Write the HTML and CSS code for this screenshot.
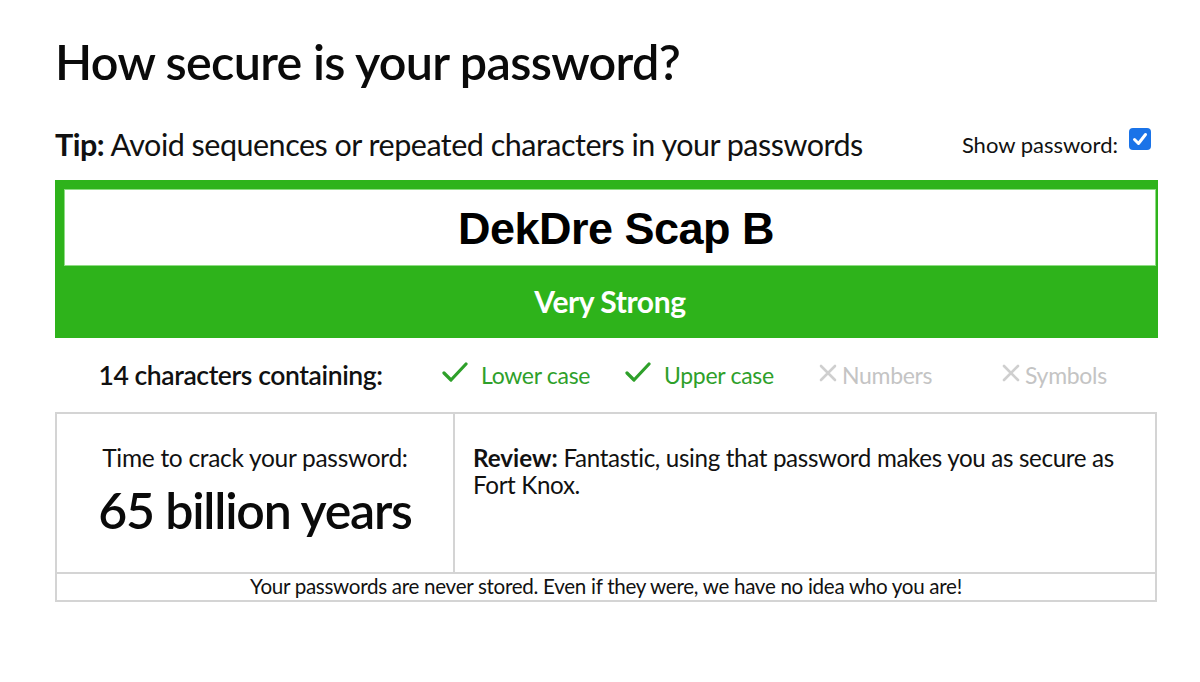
FILE: index.html
```html
<!DOCTYPE html>
<html>
<head>
<meta charset="utf-8">
<link rel="stylesheet" href="styles.css">
</head>
<body>
<div class="page">
  <h1 class="title">How secure is your password?</h1>
  <div class="tip-row">
    <p class="tip"><strong>Tip:</strong> Avoid sequences or repeated characters in your passwords</p>
    <label class="show">Show password:<span class="checkbox"><svg viewBox="0 0 22 22" width="22" height="22"><rect x="0" y="0" width="22" height="22" rx="4" fill="#1a73e8"/><path d="M5.5 11.5 L9.5 15.5 L16.5 6.5" fill="none" stroke="#fff" stroke-width="3" stroke-linecap="round" stroke-linejoin="round"/></svg></span></label>
  </div>
  <div class="meter">
    <div class="pw">DekDre Scap B</div>
    <div class="strength">Very Strong</div>
  </div>
  <div class="chars">
    <div class="count">14 characters containing:</div>
    <div class="crit ok"><svg class="ic" viewBox="0 0 26 22" width="26" height="22"><path d="M2 12 L9 19 L24 3" fill="none" stroke="#2ea02a" stroke-width="3.2" stroke-linecap="round" stroke-linejoin="round"/></svg><span>Lower case</span></div>
    <div class="crit ok"><svg class="ic" viewBox="0 0 26 22" width="26" height="22"><path d="M2 12 L9 19 L24 3" fill="none" stroke="#2ea02a" stroke-width="3.2" stroke-linecap="round" stroke-linejoin="round"/></svg><span>Upper case</span></div>
    <div class="crit no"><svg class="ix" viewBox="0 0 20 20" width="20" height="20"><path d="M3 3 L17 17 M17 3 L3 17" fill="none" stroke="#cfcfcf" stroke-width="2.6" stroke-linecap="round"/></svg><span>Numbers</span></div>
    <div class="crit no"><svg class="ix" viewBox="0 0 20 20" width="20" height="20"><path d="M3 3 L17 17 M17 3 L3 17" fill="none" stroke="#cfcfcf" stroke-width="2.6" stroke-linecap="round"/></svg><span>Symbols</span></div>
  </div>
  <div class="results">
    <div class="crack">
      <div class="crack-label">Time to crack your password:</div>
      <div class="crack-time">65 billion years</div>
    </div>
    <div class="review"><strong>Review:</strong> Fantastic, using that password makes you as secure as Fort Knox.</div>
    <div class="note">Your passwords are never stored. Even if they were, we have no idea who you are!</div>
  </div>
</div>
</body>
</html>
```

FILE: styles.css
```css
* { box-sizing: border-box; }
html, body { margin: 0; padding: 0; background: #fff; }
body { font-family: Lato, "Noto Sans", sans-serif; color: #111; }
.page { padding: 0 42px 0 55px; }
.title {
  margin: 0;
  padding-top: 33px;
  font-size: 48.5px;
  font-weight: 600;
  letter-spacing: -0.7px;
  line-height: 56px;
  color: #0a0a0a;
}
.tip-row {
  display: flex;
  align-items: center;
  justify-content: space-between;
  margin-top: 38px;
  height: 34px;
}
.tip {
  margin: 0;
  font-size: 30.5px;
  letter-spacing: -0.5px;
}
.tip strong { font-weight: 700; }
.show {
  display: flex;
  align-items: center;
  font-size: 22px;
  letter-spacing: 0;
  margin-right: 7px;
}
.checkbox { display: inline-flex; margin-left: 11px; margin-top: -11px; }
.meter {
  margin-top: 19px;
  background: #2eb31b;
  padding: 9px 2px 0 9px;
  height: 158px;
}
.pw {
  background: #fff;
  border: 1px solid #8fdc84;
  height: 77px;
  display: flex;
  align-items: center;
  justify-content: center;
  font-family: "Liberation Sans", Arial, sans-serif;
  font-weight: 700;
  font-size: 45px;
  letter-spacing: -0.5px;
  color: #000;
  padding: 2px 0 0 12px;
}
.strength {
  height: 72px;
  display: flex;
  align-items: center;
  justify-content: center;
  color: #fff;
  font-size: 30px;
  font-weight: 700;
  letter-spacing: -0.4px;
  padding-bottom: 2px;
}
.chars {
  display: grid;
  grid-template-columns: 371px repeat(4, 1fr);
  height: 74px;
  align-items: center;
  font-size: 23px;
}
.count { text-align: center; font-size: 26.5px; font-weight: 600; letter-spacing: -0.4px; padding-bottom: 1px; }
.crit { display: flex; align-items: center; letter-spacing: -0.3px; }
.crit.ok { color: #2ea02a; padding-left: 16px; }
.crit.ok .ic { margin-right: 13px; margin-top: -6px; }
.crit.no { color: #c4c4c4; padding-left: 26px; }
.crit.no .ix { margin-right: 4px; margin-top: -4px; }
.results {
  display: grid;
  grid-template-columns: 398px 1fr;
  grid-template-rows: 160px 26px;
  border: 2px solid #d4d4d4;
  margin-right: 1px;
}
.crack {
  border-right: 2px solid #d4d4d4;
  border-bottom: 2px solid #d4d4d4;
  text-align: center;
  padding-top: 30px;
}
.crack-label { font-size: 24.5px; letter-spacing: -0.3px; line-height: 28px; }
.crack-time { font-size: 50px; font-weight: 600; letter-spacing: -1.2px; line-height: 60px; margin-top: 8px; color: #0a0a0a; }
.review {
  border-bottom: 2px solid #d4d4d4;
  padding: 30px 24px 0 18px;
  font-size: 24.2px;
  line-height: 27px;
  letter-spacing: -0.35px;
}
.review strong { font-weight: 700; letter-spacing: 0; }
.note {
  grid-column: 1 / 3;
  text-align: center;
  font-size: 20.6px;
  line-height: 24px;
  letter-spacing: -0.3px;
}
```
